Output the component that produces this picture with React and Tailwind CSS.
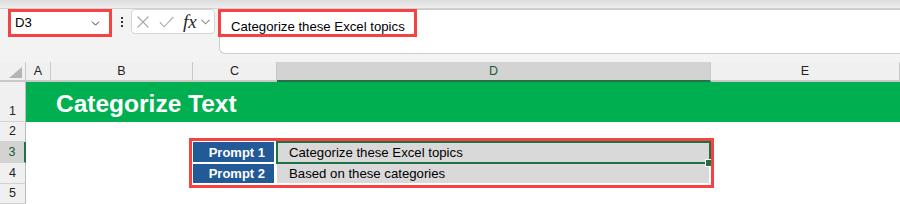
import { ChevronDown } from "lucide-react";

// column header cell
function ColHead({ label, selected }) {
  return (
    <div
      className={`flex items-center justify-center border-r border-[#c9c9c9] text-[12.5px] leading-[14px] ${
        selected
          ? "bg-[#d3d3d3] border-b-2 border-b-[#217346] text-[#185c37]"
          : "bg-[#f0f0f0] border-b-2 border-b-[#c9c9c9] text-[#222]"
      }`}
    >
      {label}
    </div>
  );
}

// row header cell
function RowHead({ n, selected }) {
  return (
    <div
      className={`flex items-end justify-center pb-[3px] border-b border-[#d2d2d2] text-[12.5px] leading-[14px] ${
        selected
          ? "bg-[#d3d3d3] border-r-2 border-r-[#217346] text-[#185c37]"
          : "bg-[#f0f0f0] border-r border-r-[#bcbcbc] text-[#222]"
      }`}
    >
      {n}
    </div>
  );
}

export default function App() {
  return (
    <div className="w-[900px] h-[204px] overflow-hidden bg-[#f3f3f3] font-['Liberation_Sans',Arial,sans-serif] text-black">
      {/* ===== ribbon edge ===== */}
      <div className="h-[9px] bg-linear-to-b from-[#dcdcdc] to-[#eeeeee] border-b border-[#d0d0d0]" />

      {/* ===== Formula bar ===== */}
      <div className="flex h-[45px] items-start">
        <div className="ml-[8px] h-[28px] w-[104px] border-[3px] border-[#f54242] bg-white">
          <div className="flex h-full items-center justify-between pl-[4px] pr-[7px] rounded-[3px]">
            <span className="text-[13.2px] leading-[16px]">D3</span>
            <ChevronDown size={13} strokeWidth={1.75} className="text-[#333]" />
          </div>
        </div>

        <div className="flex w-[19px] justify-center pt-[8px]">
          <div className="flex flex-col gap-[2px]">
            <span className="block h-[2px] w-[2px] bg-[#333]" />
            <span className="block h-[2px] w-[2px] bg-[#333]" />
            <span className="block h-[2px] w-[2px] bg-[#333]" />
          </div>
        </div>

        <div className="flex h-[25px] w-[84px] items-center rounded-[4px] border border-[#d6d6d6] bg-white pl-[5px]">
          <svg width="12" height="12" viewBox="0 0 12 12">
            <path d="M0.5 0.5 L11.5 11.5 M11.5 0.5 L0.5 11.5" stroke="#a9a9a9" strokeWidth="1.1" fill="none" />
          </svg>
          <svg width="15" height="12" viewBox="0 0 15 12" className="ml-[10px]">
            <polyline points="0.8,6.2 5.2,10.8 14.4,0.8" stroke="#a9a9a9" strokeWidth="1.1" fill="none" />
          </svg>
          <span className="ml-[9px] font-['Liberation_Serif',serif] italic text-[19px] leading-[18px] text-[#2a2a2a]">
            fx
          </span>
          <svg width="9" height="6" viewBox="0 0 9 6" className="ml-[4px]">
            <polyline points="0.5,0.8 4.5,4.8 8.5,0.8" stroke="#8c8c8c" strokeWidth="1.1" fill="none" />
          </svg>
        </div>

        <div className="relative ml-[4px] h-[45px] flex-1 rounded-l-[6px] border border-r-0 border-[#cdcdcd] bg-white pl-[11px] pt-[4px]">
          <span className="text-[13.2px] leading-[16px]">Categorize these Excel topics</span>
          <div className="absolute left-[-2px] top-[-1px] h-[28px] w-[199px] border-[3px] border-[#f54242]" />
        </div>
      </div>

      <div className="h-[8px]" />

      {/* ===== Sheet grid ===== */}
      <div className="relative grid grid-cols-[26px_25px_142px_84px_434px_189px] grid-rows-[20px_40px_20px_21px_21px_20px]">
        {/* header row */}
        <div className="relative bg-[#f0f0f0] border-r border-b-2 border-[#c9c9c9]">
          <svg width="26" height="20" viewBox="0 0 26 20" className="absolute left-0 top-0">
            <polygon points="22,5 22,16 9,16" fill="#b4b4b4" />
          </svg>
        </div>
        <ColHead label="A" />
        <ColHead label="B" />
        <ColHead label="C" />
        <ColHead label="D" selected />
        <ColHead label="E" />

        {/* row 1 */}
        <RowHead n="1" />
        <div className="col-span-5 flex items-end bg-[#00b050] pl-[30px] pb-[4px]">
          <span className="text-[24.5px] leading-[28px] font-bold text-white">Categorize Text</span>
        </div>

        {/* row 2 */}
        <RowHead n="2" />
        <div className="col-span-5 bg-white" />

        {/* row 3 */}
        <RowHead n="3" selected />
        <div className="col-span-2 bg-white" />
        <div className="flex items-center justify-end bg-[#215a96] border-r-[3px] border-b border-white pr-[9px] pt-[1px] text-[13px] leading-[16px] font-bold text-white">
          Prompt 1
        </div>
        <div className="flex items-center bg-[#d9d9d9] pl-[12px] pt-[1px] text-[13.2px] leading-[16px]">
          Categorize these Excel topics
        </div>
        <div className="bg-white" />

        {/* row 4 */}
        <RowHead n="4" />
        <div className="col-span-2 bg-white" />
        <div className="flex items-center justify-end bg-[#215a96] border-r-[3px] border-y border-white pr-[9px] pt-[1px] text-[13px] leading-[16px] font-bold text-white">
          Prompt 2
        </div>
        <div className="flex items-center bg-[#d9d9d9] border-y border-r-2 border-white pl-[12px] pt-[1px] text-[13.2px] leading-[16px]">
          Based on these categories
        </div>
        <div className="bg-white" />

        {/* row 5 */}
        <RowHead n="5" />
        <div className="col-span-5 bg-white" />

        {/* active cell D3 + fill handle */}
        <div className="absolute left-[276px] top-[79px] h-[23px] w-[435px] border-2 border-[#1e7145]" />
        <div className="absolute left-[705px] top-[97px] h-[8px] w-[8px] border border-white bg-[#1e7145]" />

        {/* red annotation box */}
        <div className="absolute left-[189px] top-[76px] h-[50px] w-[525px] border-[3px] border-[#f54242]" />
      </div>
    </div>
  );
}
